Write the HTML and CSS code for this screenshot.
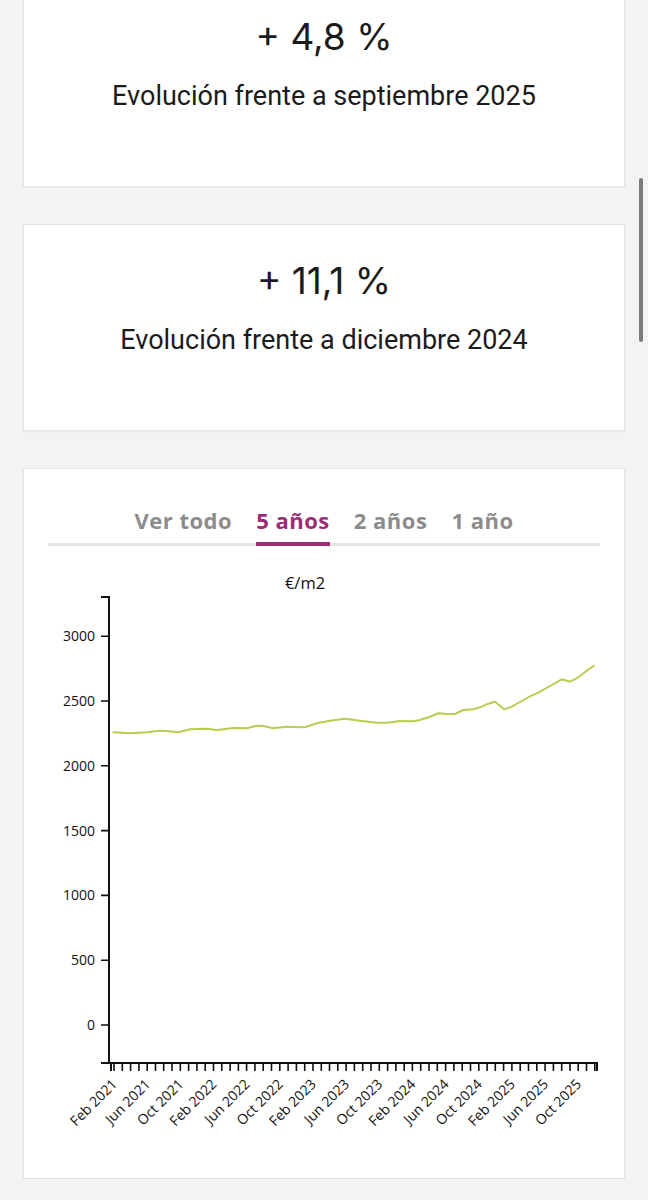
FILE: index.html
```html
<!DOCTYPE html>
<html lang="es">
<head>
<meta charset="utf-8">
<title>Evolución del precio</title>
<link rel="stylesheet" href="styles.css">
</head>
<body>
<main class="page">
  <section class="card stat first">
    <div class="stat-value">+ 4,8 %</div>
    <div class="stat-label">Evolución frente a septiembre 2025</div>
  </section>
  <section class="card stat">
    <div class="stat-value">+ 11,1 %</div>
    <div class="stat-label">Evolución frente a diciembre 2024</div>
  </section>
  <section class="card chart-card">
    <nav class="tabs">
      <span class="tab">Ver todo</span>
      <span class="tab active">5 años</span>
      <span class="tab">2 años</span>
      <span class="tab">1 año</span>
    </nav>
    <svg class="chart" width="600" height="632" viewBox="24 546 600 632" xmlns="http://www.w3.org/2000/svg">
      <text class="unit" x="305" y="589" text-anchor="middle">€/m2</text>
      <g class="yaxis">
        <path class="domain" d="M101,597H109V1063H101"/>
        <path class="ticks" d="M101,636.2H109M101,701H109M101,765.8H109M101,830.6H109M101,895.4H109M101,960.2H109M101,1025H109"/>
        <text x="95" y="641">3000</text>
        <text x="95" y="706">2500</text>
        <text x="95" y="771">2000</text>
        <text x="95" y="835.6">1500</text>
        <text x="95" y="900.4">1000</text>
        <text x="95" y="965.2">500</text>
        <text x="95" y="1030">0</text>
      </g>
      <g class="xaxis">
        <path class="domain" d="M111,1071V1063H597V1071"/>
        <path class="ticks" d="M114,1063V1071M122.3,1063V1071M130.6,1063V1071M138.9,1063V1071M147.2,1063V1071M155.5,1063V1071M163.7,1063V1071M172,1063V1071M180.3,1063V1071M188.6,1063V1071M196.9,1063V1071M205.2,1063V1071M213.5,1063V1071M221.8,1063V1071M230.1,1063V1071M238.4,1063V1071M246.6,1063V1071M254.9,1063V1071M263.2,1063V1071M271.5,1063V1071M279.8,1063V1071M288.1,1063V1071M296.4,1063V1071M304.7,1063V1071M313,1063V1071M321.3,1063V1071M329.5,1063V1071M337.8,1063V1071M346.1,1063V1071M354.4,1063V1071M362.7,1063V1071M371,1063V1071M379.3,1063V1071M387.6,1063V1071M395.9,1063V1071M404.2,1063V1071M412.4,1063V1071M420.7,1063V1071M429,1063V1071M437.3,1063V1071M445.6,1063V1071M453.9,1063V1071M462.2,1063V1071M470.5,1063V1071M478.8,1063V1071M487.1,1063V1071M495.3,1063V1071M503.6,1063V1071M511.9,1063V1071M520.2,1063V1071M528.5,1063V1071M536.8,1063V1071M545.1,1063V1071M553.4,1063V1071M561.7,1063V1071M570,1063V1071M578.2,1063V1071M586.5,1063V1071M594.8,1063V1071"/>
        <text transform="translate(118,1085) rotate(-45)">Feb 2021</text>
        <text transform="translate(151.2,1085) rotate(-45)">Jun 2021</text>
        <text transform="translate(184.3,1085) rotate(-45)">Oct 2021</text>
        <text transform="translate(217.5,1085) rotate(-45)">Feb 2022</text>
        <text transform="translate(250.6,1085) rotate(-45)">Jun 2022</text>
        <text transform="translate(283.8,1085) rotate(-45)">Oct 2022</text>
        <text transform="translate(317,1085) rotate(-45)">Feb 2023</text>
        <text transform="translate(350.1,1085) rotate(-45)">Jun 2023</text>
        <text transform="translate(383.3,1085) rotate(-45)">Oct 2023</text>
        <text transform="translate(416.4,1085) rotate(-45)">Feb 2024</text>
        <text transform="translate(449.6,1085) rotate(-45)">Jun 2024</text>
        <text transform="translate(482.8,1085) rotate(-45)">Oct 2024</text>
        <text transform="translate(515.9,1085) rotate(-45)">Feb 2025</text>
        <text transform="translate(549.1,1085) rotate(-45)">Jun 2025</text>
        <text transform="translate(582.2,1085) rotate(-45)">Oct 2025</text>
      </g>
      <polyline class="line" points="113.3,732.3 130,733.3 146.7,732.3 160,730.7 166.7,731 178.3,732.3 190,729.3 206.7,728.7 216.7,730 233.3,728 246.7,728.3 256.7,725.7 263.3,726 273.3,728.3 286.7,726.7 305,727.3 316.7,723.3 330,720.7 345,718.7 360,720.7 376.7,722.7 386.7,722.7 400,721 413.3,721.3 420,720 430,716.7 438.3,713.3 446.7,714 455,714 463.3,710 473.3,709.3 480,707.3 486.7,704.3 495,701.7 504,709.3 511.7,706.7 520,702 530,696.3 538.3,692.7 548.3,687 561.7,679.3 570,681.7 578.3,677.3 586.7,670.7 594,665.7"/>
    </svg>
  </section>
</main>
<div class="scrollbar"></div>
</body>
</html>
```
FILE: styles.css
```css
* { box-sizing: border-box; }
html, body { margin: 0; padding: 0; }
body {
  background: #f3f3f1;
  overflow: hidden;
  color: #1b1b1b;
  font-family: Roboto, "Liberation Sans", sans-serif;
}
.page {
  padding: 0 23px;
  display: flex;
  flex-direction: column;
  gap: 37px;
}
.card {
  width: 602px;
  background: #ffffff;
  border: 1px solid #e4e4e2;
  box-shadow: 0 1px 1px rgba(0, 0, 0, 0.03);
}
.card.first { margin-top: -20px; }
.stat {
  height: 207px;
  padding-top: 34px;
  text-align: center;
}
.stat-value {
  font-family: Inter, Roboto, sans-serif;
  font-size: 37px;
  line-height: 44px;
  font-weight: 400;
}
.stat-label {
  margin-top: 19px;
  font-size: 27px;
  line-height: 36px;
}
.chart-card {
  height: 711px;
}
.tabs {
  margin: 0 24px;
  padding-top: 37px;
  border-bottom: 3px solid #e6e6e6;
  display: flex;
  justify-content: center;
  gap: 24px;
}
.tab {
  position: relative;
  font-family: "Open Sans", "Noto Sans", sans-serif;
  font-weight: 700;
  font-size: 22px;
  line-height: 28px;
  letter-spacing: 0.5px;
  color: #8c8c8c;
  padding-bottom: 9px;
}
.tab.active { color: #9d2b77; }
.tab.active::after {
  content: "";
  position: absolute;
  left: 0;
  right: 0;
  bottom: -3px;
  height: 4px;
  background: #9d2b77;
}
.chart { display: block; }
.chart text {
  font-family: "Open Sans", "Noto Sans", sans-serif;
  font-size: 14px;
  fill: #111111;
}
.chart .unit { font-size: 16.5px; }
.yaxis text { text-anchor: end; }
.xaxis text { text-anchor: end; }
.domain { fill: none; stroke: #111111; stroke-width: 2; }
.ticks { fill: none; stroke: #111111; stroke-width: 1.6; }
.line {
  fill: none;
  stroke: #b7ce50;
  stroke-width: 2;
  stroke-linejoin: round;
  stroke-linecap: round;
}
.scrollbar {
  position: fixed;
  top: 178px;
  right: 5px;
  width: 4px;
  height: 164px;
  border-radius: 2px;
  background: #7b7b7b;
}
```
